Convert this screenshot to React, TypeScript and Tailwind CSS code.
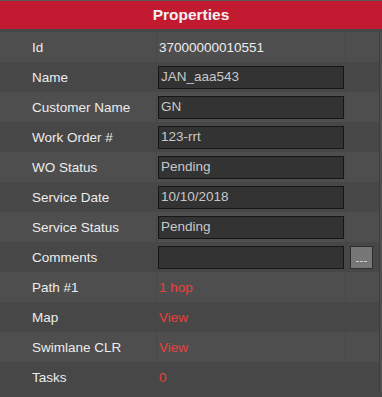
import React from "react";

type Row = { label: string; kind: "text" | "input" | "link" | "comments"; value: string };

const rows: Row[] = [
  { label: "Id", kind: "text", value: "37000000010551" },
  { label: "Name", kind: "input", value: "JAN_aaa543" },
  { label: "Customer Name", kind: "input", value: "GN" },
  { label: "Work Order #", kind: "input", value: "123-rrt" },
  { label: "WO Status", kind: "input", value: "Pending" },
  { label: "Service Date", kind: "input", value: "10/10/2018" },
  { label: "Service Status", kind: "input", value: "Pending" },
  { label: "Comments", kind: "comments", value: "" },
  { label: "Path #1", kind: "link", value: "1 hop" },
  { label: "Map", kind: "link", value: "View" },
  { label: "Swimlane CLR", kind: "link", value: "View" },
  { label: "Tasks", kind: "link", value: "0" },
];

export default function App() {
  return (
    <div
      className="w-[382px] h-[397px] bg-[#474747] overflow-hidden flex flex-col"
      style={{ fontFamily: "Arial, 'Liberation Sans', sans-serif" }}
    >
      <div className="h-[1px] bg-[#5a5a5a]" />
      <div className="h-[28px] bg-[#c21a30] flex items-center justify-center text-[15.5px] font-bold text-[#f2f2f2]">
        Properties
      </div>
      <div className="h-[3px]" />
      <div className="flex flex-col">
        {rows.map((r, i) => {
          const alt = i % 2 === 0;
          const cell = alt ? "bg-[#4e4e4e]" : "";
          return (
            <div key={r.label} className="flex h-[30px] text-[13.5px]">
              <div className={`w-[156px] flex items-center pl-[32px] pt-[2px] text-[#ececec] ${cell}`}>{r.label}</div>
              <div className={`ml-[1px] w-[188px] flex items-center ${cell}`}>
                {r.kind === "text" && <span className="pl-[2px] pt-[2px] text-[#ececec]">{r.value}</span>}
                {(r.kind === "input" || r.kind === "comments") && (
                  <div className="ml-[1px] mt-[1px] w-[186px] h-[23px] bg-[#333333] border border-[#161616] flex items-center pl-[2px] text-[#c8c8c8]">
                    {r.value}
                  </div>
                )}
                {r.kind === "link" && <span className="pl-[2px] pt-[2px] text-[#e8413c]">{r.value}</span>}
              </div>
              <div className={`ml-[1px] w-[33px] flex items-center ${cell}`}>
                {r.kind === "comments" && (
                  <div className="ml-[4px] mt-[1px] w-[23px] h-[23px] bg-[#777777] border border-[#2e2e2e] flex items-end justify-center pb-[6px]">
                    <div className="flex gap-[1px]">
                      <div className="w-[3px] h-[1px] bg-[#cfcfcf]" />
                      <div className="w-[3px] h-[1px] bg-[#cfcfcf]" />
                      <div className="w-[3px] h-[1px] bg-[#cfcfcf]" />
                    </div>
                  </div>
                )}
              </div>
              <div className="w-[1px] bg-[#3e3e3e]" />
              <div className="flex-1 bg-[#505050]" />
            </div>
          );
        })}
      </div>
    </div>
  );
}
